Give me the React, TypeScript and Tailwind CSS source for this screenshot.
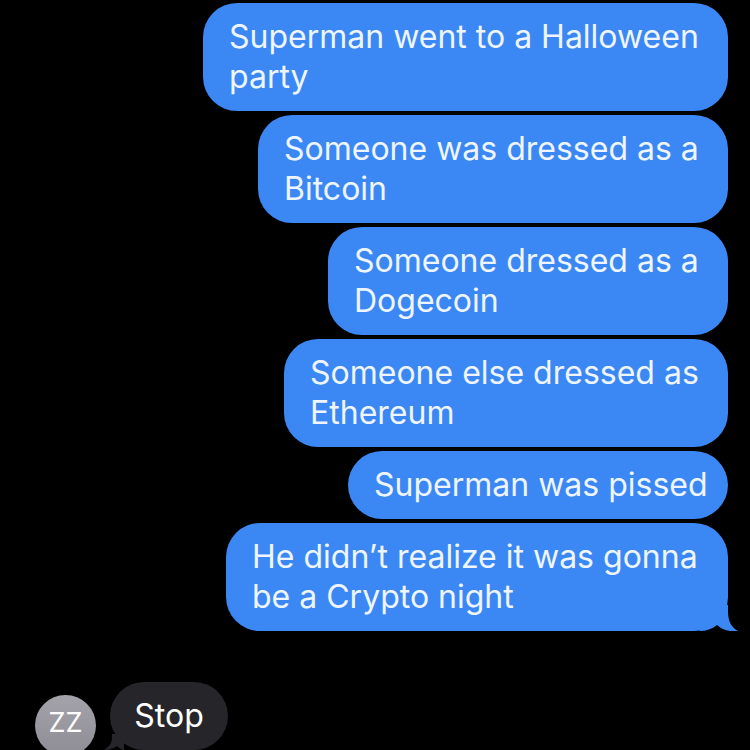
const font = { fontFamily: 'Inter, "Liberation Sans", Arial, sans-serif' };

type Msg = { lines: string[]; width: string; tail?: boolean };

const messages: Msg[] = [
  { lines: ['Superman went to a Halloween', 'party'], width: 'w-[525px]' },
  { lines: ['Someone was dressed as a', 'Bitcoin'], width: 'w-[470px]' },
  { lines: ['Someone dressed as a', 'Dogecoin'], width: 'w-[400px]' },
  { lines: ['Someone else dressed as', 'Ethereum'], width: 'w-[444px]' },
  { lines: ['Superman was pissed'], width: 'w-[380px]' },
  { lines: ["He didn\u2019t realize it was gonna", 'be a Crypto night'], width: 'w-[502px]', tail: true },
];

function SentBubble({ msg }: { msg: Msg }) {
  return (
    <div className={`relative ${msg.width} rounded-[34px] bg-[#3b88f4] px-[26px] py-[14px] text-[32px] leading-[40px] text-[#eef5ff]`}>
      {msg.lines.map((line, i) => (
        <div key={i} className="whitespace-nowrap">
          {line}
        </div>
      ))}
      {msg.tail && (
        <svg className="absolute right-[-10px] bottom-0" width="38" height="26" viewBox="0 0 38 26">
          <path d="M0 0 H28 V6 C28 16 31 22 38 26 C30 27 22 25 17 20 C12 24 6 26 0 26 Z" fill="#3b88f4" />
        </svg>
      )}
    </div>
  );
}

export default function App() {
  return (
    <div className="h-[750px] w-[750px] overflow-hidden bg-black" style={font}>
      <div className="flex flex-col items-end gap-[4px] pr-[22px] pt-[3px]">
        {messages.map((m, i) => (
          <SentBubble key={i} msg={m} />
        ))}
      </div>

      {/* incoming */}
      <div className="mt-[51px] flex items-start gap-[14px] pl-[35px]">
        <div className="mt-[13px] flex h-[61px] w-[61px] items-center justify-center rounded-full bg-gradient-to-b from-[#a4a3ab] to-[#8e8d95] pb-[4px] text-[27px] text-white">
          ZZ
        </div>
        <div className="relative flex h-[68px] w-[118px] items-center justify-center rounded-[34px] bg-[#26262a] text-[32px] text-white">
          Stop
          <svg className="absolute left-[-6px] bottom-0" width="20" height="16" viewBox="0 0 20 16">
            <path d="M20 0 H8 V4 C8 9 5 13 0 16 C6 16 10 14 13 12 C15 14 18 16 20 16 Z" fill="#26262a" />
          </svg>
        </div>
      </div>
    </div>
  );
}
